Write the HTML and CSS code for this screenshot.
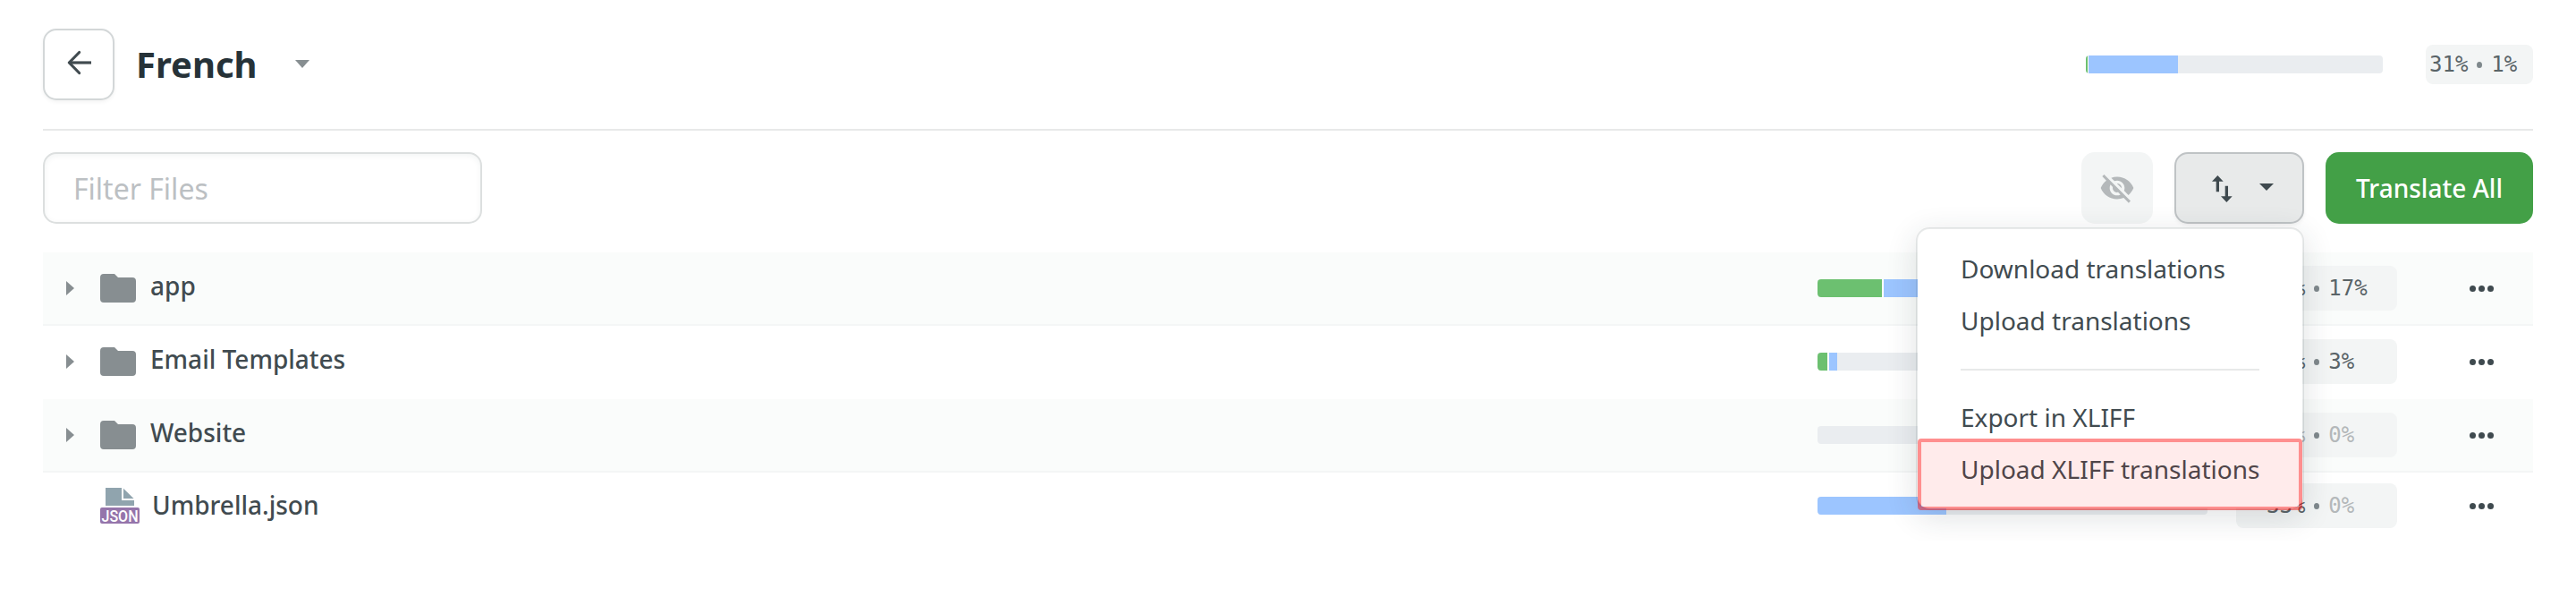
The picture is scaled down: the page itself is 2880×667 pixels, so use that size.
FILE: index.html
```html
<!DOCTYPE html>
<html lang="en">
<head>
<meta charset="utf-8">
<title>French</title>
<link rel="stylesheet" href="styles.css">
</head>
<body>
<main class="page">
  <header class="header">
    <button class="btn back" aria-label="Back">
      <svg width="28" height="28" viewBox="0 0 28 28" fill="none" stroke="#414b50" stroke-width="3.2" stroke-linejoin="round"><path d="M28 14H3.500"/><path d="M14.600 2.500 3.300 14l11.300 11.500" stroke-linecap="round"/></svg>
    </button>
    <h1 class="title">French</h1>
    <svg class="title-caret" width="16" height="9" viewBox="0 0 16 9"><path d="M0 0h16L8 9z" fill="#878e91"/></svg>
    <div class="bar header-bar"><i class="approved" style="width:2px"></i><i class="translated" style="width:100px"></i></div>
    <div class="badge header-badge"><span>31%</span><b></b><span>1%</span></div>
  </header>

  <section class="toolbar">
    <input class="filter" type="text" placeholder="Filter Files">
    <button class="btn hide" aria-label="Hidden files">
      <svg width="40" height="40" viewBox="0 0 24 24" fill="#b4b8ba"><path d="M12 7c2.760 0 5 2.240 5 5 0 .65-.13 1.260-.36 1.830l2.920 2.920c1.510-1.260 2.700-2.890 3.430-4.750-1.730-4.390-6-7.500-11-7.500-1.400 0-2.740.25-3.980.7l2.160 2.160C10.740 7.130 11.350 7 12 7zM2 4.270l2.280 2.280.46.46C3.080 8.300 1.780 10.020 1 12c1.730 4.390 6 7.500 11 7.500 1.550 0 3.030-.3 4.380-.84l.42.42L19.730 22 21 20.730 3.270 3 2 4.270zM7.530 9.800l1.550 1.550c-.05.21-.08.43-.08.65 0 1.660 1.340 3 3 3 .22 0 .44-.03.65-.08l1.550 1.550c-.67.33-1.410.53-2.200.53-2.760 0-5-2.240-5-5 0-.79.2-1.530.53-2.200zm4.310-.78 3.150 3.150.02-.16c0-1.660-1.340-3-3-3l-.17.01z"/></svg>
    </button>
    <div class="dropdown">
      <button class="btn sort" aria-label="Transfer translations">
        <svg width="23" height="30" viewBox="0 0 23 30" fill="#3f4a4f"><path d="M6.350 0 12.700 6.700H8v11.600H4.700V6.700H0zM16.350 30 10 23.300h4.700V11.700H18v11.600h4.700z"/></svg>
        <svg class="sort-caret" width="16" height="8" viewBox="0 0 16 8" fill="#3f4a4f"><path d="M0 0h16L8 8z"/></svg>
      </button>
      <div class="menu">
        <a class="item">Download translations</a>
        <a class="item">Upload translations</a>
        <hr class="separator">
        <a class="item">Export in XLIFF</a>
        <a class="item">Upload XLIFF translations</a>
        <div class="highlight"></div>
      </div>
    </div>
    <button class="btn primary">Translate All</button>
  </section>

  <section class="files">
    <div class="row shaded">
      <svg class="expand" width="9" height="16" viewBox="0 0 9 16"><path d="M0 0l9 8-9 8z"/></svg>
      <svg class="folder" width="40" height="32" viewBox="0 0 40 32"><path d="M4 0h12l4 4h16a4 4 0 0 1 4 4v20a4 4 0 0 1-4 4H4a4 4 0 0 1-4-4V4a4 4 0 0 1 4-4z"/></svg>
      <span class="name">app</span>
      <div class="bar"><i class="approved" style="width:72px"></i><i class="translated" style="width:160px"></i></div>
      <div class="badge"><span>53%</span><b></b><span>17%</span></div>
      <div class="more"><i></i><i></i><i></i></div>
    </div>
    <div class="row">
      <svg class="expand" width="9" height="16" viewBox="0 0 9 16"><path d="M0 0l9 8-9 8z"/></svg>
      <svg class="folder" width="40" height="32" viewBox="0 0 40 32"><path d="M4 0h12l4 4h16a4 4 0 0 1 4 4v20a4 4 0 0 1-4 4H4a4 4 0 0 1-4-4V4a4 4 0 0 1 4-4z"/></svg>
      <span class="name">Email Templates</span>
      <div class="bar"><i class="approved" style="width:11px"></i><i class="translated" style="width:9px"></i></div>
      <div class="badge"><span>&nbsp;5%</span><b></b><span>3%</span></div>
      <div class="more"><i></i><i></i><i></i></div>
    </div>
    <div class="row shaded">
      <svg class="expand" width="9" height="16" viewBox="0 0 9 16"><path d="M0 0l9 8-9 8z"/></svg>
      <svg class="folder" width="40" height="32" viewBox="0 0 40 32"><path d="M4 0h12l4 4h16a4 4 0 0 1 4 4v20a4 4 0 0 1-4 4H4a4 4 0 0 1-4-4V4a4 4 0 0 1 4-4z"/></svg>
      <span class="name">Website</span>
      <div class="bar"></div>
      <div class="badge"><span class="zero">&nbsp;0%</span><b></b><span class="zero">0%</span></div>
      <div class="more"><i></i><i></i><i></i></div>
    </div>
    <div class="row last">
      <span class="expand-space"></span>
      <svg class="json" width="44" height="40" viewBox="0 0 44 40"><path d="M6 0h18v14h14v6H6z" fill="#90a4ae"/><path d="M26 .8V12h11.500z" fill="#90a4ae"/><rect y="22" width="44" height="18" rx="2" fill="#9575ab"/><text class="json-label" x="22" y="37.500" text-anchor="middle" textLength="41" lengthAdjust="spacingAndGlyphs">JSON</text></svg>
      <span class="name">Umbrella.json</span>
      <div class="bar"><i class="translated" style="width:144px"></i></div>
      <div class="badge"><span>33%</span><b></b><span class="zero">0%</span></div>
      <div class="more"><i></i><i></i><i></i></div>
    </div>
  </section>
</main>
</body>
</html>
```
FILE: styles.css
```css
* { box-sizing: border-box; }

body {
  margin: 0;
  background: #fff;
  color: #414b50;
  font-family: "Noto Sans", "Open Sans", sans-serif;
  font-size: 28px;
}

.page { padding: 0 48px; }

.btn {
  display: flex;
  align-items: center;
  justify-content: center;
  height: 80px;
  padding: 0;
  border: 2px solid #d3d7d8;
  border-radius: 15px;
  background: #fff;
  font: inherit;
}

/* Header */
.header {
  display: flex;
  align-items: center;
  height: 146px;
  border-bottom: 2px solid #e8e9e9;
}
.back { width: 80px; box-shadow: 0 2px 4px rgba(0, 0, 0, .05); }
.back svg { margin-top: -4px; }
.title {
  margin: 0 0 0 24px;
  color: #263238;
  font-size: 40px;
  font-weight: 700;
  line-height: 54px;
}
.title-caret { margin: -2px auto 0 42px; }

.bar {
  display: flex;
  gap: 2px;
  width: 436px;
  height: 20px;
  overflow: hidden;
  border-radius: 4px;
  background: #eaedf0;
}
.bar i { flex: none; height: 100%; }
.approved { background: #6cc070; box-shadow: 2px 0 #fff; }
.translated { background: #9cc5ff; }
.header-bar { gap: 1px; width: 332px; }

.badge {
  display: flex;
  align-items: center;
  width: 180px;
  height: 50px;
  margin-left: 32px;
  padding-left: 34px;
  border-radius: 8px;
  background: #f3f5f5;
  color: #5a6468;
  font-family: "DejaVu Sans Mono", "Liberation Mono", monospace;
  font-size: 24px;
}
.badge b {
  width: 6px;
  height: 7px;
  margin: 0 10px;
  border-radius: 50%;
  background: #7f888c;
}
.badge .zero { color: #b4b8ba; }
.header-badge {
  width: 120px;
  height: 44px;
  margin-left: 48px;
  padding-left: 4px;
}

/* Toolbar */
.toolbar {
  display: flex;
  height: 136px;
  padding-top: 24px;
}
.filter {
  width: 491px;
  height: 80px;
  margin-right: auto;
  padding: 0 32px;
  border: 2px solid #dcdfdf;
  border-radius: 15px;
  box-shadow: inset 0 2px 6px rgba(38, 70, 60, .06);
  font: 32px "Noto Sans", "Open Sans", sans-serif;
}
.filter::placeholder { color: #bcc0c3; opacity: 1; }
.hide { width: 80px; border: 0; background: #f3f5f5; }
.dropdown { position: relative; margin: 0 24px; }
.sort {
  gap: 30px;
  width: 145px;
  padding: 2px 0 0 8px;
  border-color: #bfc3c5;
  background: #e8eaea;
  box-shadow: 0 2px 4px rgba(0, 0, 0, .06);
}
.sort-caret { margin-top: -4px; }
.primary {
  width: 232px;
  border: 0;
  background: #43a047;
  color: #fff;
  font-weight: 500;
}

/* Transfer menu */
.menu {
  position: absolute;
  top: 84px;
  right: 0;
  z-index: 2;
  width: 434px;
  height: 316px;
  padding: 15px 48px 0 48px;
  border: 2px solid rgba(38, 60, 56, .1);
  border-radius: 15px;
  background: #fff;
  background-clip: padding-box;
  box-shadow: 0 8px 34px rgba(38, 50, 56, .14);
}
.item {
  display: block;
  height: 58px;
  line-height: 58px;
  white-space: nowrap;
}
.separator {
  height: 2px;
  margin: 25px 0 23px;
  border: 0;
  background: #e8e9e9;
}
.highlight {
  position: absolute;
  right: 0;
  bottom: -2px;
  left: 0;
  height: 80px;
  border: 4px solid rgba(255, 0, 0, .44);
  border-radius: 4px;
  background: rgba(255, 0, 0, .08);
  background-clip: padding-box;
}

/* File list */
.row {
  display: flex;
  align-items: center;
  height: 82px;
  padding: 0 44px 0 26px;
  border-bottom: 2px solid transparent;
}
.shaded { border-color: #f4f6f6; background: #fafcfb; }
.last { height: 76px; }
.expand, .folder { fill: #878e91; }
.expand { width: 9px; }
.expand-space { width: 9px; }
.folder, .json { margin-left: 29px; }
.json { overflow: visible; }
.name {
  margin: -7px auto 0 16px;
  font-weight: 500;
}
.last .name { margin: -2px auto 0 14px; }
.json-label {
  fill: #fff;
  font-family: Roboto, "Liberation Sans", sans-serif;
  font-size: 19px;
  font-weight: 500;
}
.more { display: flex; gap: 3px; margin-left: 81px; }
.more i { width: 7px; height: 7px; border-radius: 50%; background: #3f4a4f; }
```
